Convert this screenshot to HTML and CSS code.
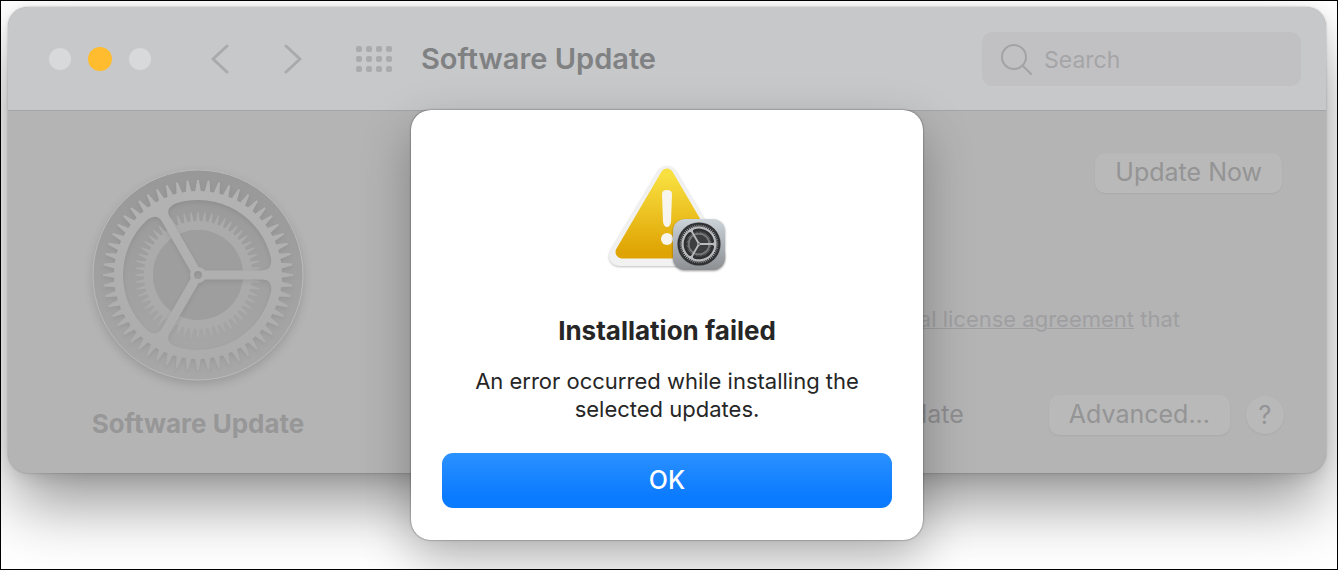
FILE: index.html
```html
<!DOCTYPE html>
<html lang="en">
<head>
    <meta charset="UTF-8">
    <meta name="viewport" content="width=device-width, initial-scale=1.0">
    <title>Software Update</title>
    <link rel="stylesheet" href="styles.css">
</head>
<body>
    <!-- shared gear drawing, coloured with custom properties -->
    <svg class="defs" width="0" height="0" aria-hidden="true">
        <defs>
            <path id="cutout" d="M2.6-4.5H64Q74.8-4.5 73-17A75 75 0 0 0-21.8-71.8Q-33.5-67-28.1-57.7Z"/>
            <mask id="spokes" maskUnits="userSpaceOnUse" x="-110" y="-110" width="220" height="220">
                <circle r="105" fill="#fff"/>
                <use href="#cutout"/>
                <use href="#cutout" transform="rotate(120)"/>
                <use href="#cutout" transform="rotate(240)"/>
                <circle r="8" fill="#fff"/>
                <circle r="4"/>
            </mask>
            <linearGradient id="disc" x1="0" y1="0" x2="0" y2="1">
                <stop offset="0" stop-color="#989899"/>
                <stop offset="1" stop-color="#a8a8a9"/>
            </linearGradient>
            <linearGradient id="front" x1="0" y1="0" x2="0" y2="1">
                <stop offset="0" stop-color="#b3b3b4"/>
                <stop offset="1" stop-color="#acacad"/>
            </linearGradient>
            <linearGradient id="yellow" x1="0" y1="0" x2="0" y2="1">
                <stop offset="0" stop-color="#f8e040"/>
                <stop offset="1" stop-color="#dfa403"/>
            </linearGradient>
            <linearGradient id="tile" x1="0" y1="0" x2="0" y2="1">
                <stop offset="0" stop-color="#cbd3d9"/>
                <stop offset="1" stop-color="#8d9093"/>
            </linearGradient>
            <g id="gear">
                <circle class="gear-disc" r="105"/>
                <path class="gear-inner" id="inner-teeth"/>
                <circle class="gear-core" r="45"/>
                <g class="gear-front">
                    <path id="outer-teeth" mask="url(#spokes)"/>
                </g>
            </g>
        </defs>
    </svg>

    <div class="desktop">
        <main class="window">
            <header class="toolbar">
                <div class="lights">
                    <button class="light" aria-label="Close"></button>
                    <button class="light minimize" aria-label="Minimize"></button>
                    <button class="light" aria-label="Zoom"></button>
                </div>
                <nav class="nav">
                    <button class="icon-btn" aria-label="Back">
                        <svg width="18" height="30" viewBox="0 0 18 30"><path d="M16 2L2 15L16 28"/></svg>
                    </button>
                    <button class="icon-btn" aria-label="Forward">
                        <svg width="18" height="30" viewBox="0 0 18 30"><path d="M2 2L16 15L2 28"/></svg>
                    </button>
                </nav>
                <button class="icon-btn all" aria-label="Show all">
                    <span></span><span></span><span></span><span></span>
                    <span></span><span></span><span></span><span></span>
                    <span></span><span></span><span></span><span></span>
                </button>
                <h1 class="title">Software Update</h1>
                <label class="search">
                    <svg width="32" height="32" viewBox="0 0 32 32"><circle cx="14" cy="14" r="12"/><path d="M23 23L31 31"/></svg>
                    <input type="text" placeholder="Search" aria-label="Search">
                </label>
            </header>

            <div class="content">
                <section class="pane">
                    <svg class="pane-icon" viewBox="-110 -110 220 220"><use href="#gear"/></svg>
                    <h2>Software Update</h2>
                </section>
                <section class="details">
                    <button class="btn">Update Now</button>
                    <p class="license"><a href="#">original license agreement</a> that</p>
                    <div class="options">
                        <span class="auto">up to date</span>
                        <button class="btn advanced">Advanced...</button>
                        <button class="btn help" aria-label="Help">?</button>
                    </div>
                </section>
            </div>

            <div class="dialog" role="alertdialog" aria-labelledby="dialog-title" aria-describedby="dialog-text">
                <svg class="warning" viewBox="0 0 120 120">
                    <path class="warning-edge" d="M60 21L108 101H12Z"/>
                    <path class="warning-fill" d="M60 20L105 97H15Z"/>
                    <path class="mark" d="M55 39Q55 35 60 35T65 39L64 67Q63 72 60 72T56 67Z"/>
                    <circle class="mark" cx="60" cy="84" r="6"/>
                    <rect class="tile" x="66" y="64" width="52" height="51" rx="12"/>
                    <use class="badge-gear" href="#gear" transform="translate(92 89) scale(.205)"/>
                </svg>
                <h2 id="dialog-title">Installation failed</h2>
                <p id="dialog-text">An error occurred while installing the selected updates.</p>
                <button class="ok">OK</button>
            </div>
        </main>
    </div>

    <script>
        // toothed ring as one path: base radius, tip radius, hole radius
        function toothedRing(count, base, tip, hole) {
            const step = Math.PI * 2 / count;
            const point = (r, a) => `${(r * Math.cos(a)).toFixed(2)} ${(r * Math.sin(a)).toFixed(2)}`;
            let d = '';
            for (let i = 0; i < count; i++) {
                const a = i * step;
                d += (i ? 'L' : 'M') + point(base, a - step * 0.3);
                d += 'L' + point(tip, a - step * 0.08);
                d += 'L' + point(tip, a + step * 0.08);
                d += 'L' + point(base, a + step * 0.3);
            }
            d += 'Z';
            if (hole) {
                d += `M${hole} 0A${hole} ${hole} 0 1 0 ${-hole} 0A${hole} ${hole} 0 1 0 ${hole} 0Z`;
            }
            return d;
        }

        document.getElementById('outer-teeth').setAttribute('d', toothedRing(56, 84, 95, 0));
        document.getElementById('inner-teeth').setAttribute('d', toothedRing(56, 54, 63, 45));
    </script>
</body>
</html>
```

FILE: styles.css
```css
* {
    box-sizing: border-box;
}
body {
    margin: 0;
    font-family: Inter, "Liberation Sans", sans-serif;
    color: #262626;
}
button {
    font-family: inherit;
    border: none;
    padding: 0;
    cursor: pointer;
}
h1, h2, p {
    margin: 0;
}
.defs {
    position: absolute;
}
.desktop {
    min-height: 100vh;
    padding: 6px 11px 6px 7px;
    border: 1px solid #000;
    background: #fff;
    overflow: hidden;
}
.window {
    position: relative;
    border-radius: 20px;
    background: #b4b4b5;
    box-shadow: 0 0 2px rgba(0, 0, 0, 0.3), 0 36px 64px -6px rgba(0, 0, 0, 0.42), 0 4px 16px rgba(0, 0, 0, 0.1);
}

/* toolbar */
.toolbar {
    display: flex;
    align-items: center;
    height: 104px;
    padding: 0 25px 0 41px;
    border-bottom: 1px solid #a5a5a6;
    border-radius: 20px 20px 0 0;
    background: #c7c8ca;
}
.lights {
    display: flex;
    align-items: center;
    gap: 18px;
}
.light {
    width: 22px;
    height: 22px;
    border-radius: 50%;
    background: #d8d9db;
}
.minimize {
    width: 24px;
    height: 24px;
    margin: 0 -1px;
    background: #febc2e;
}
.nav {
    display: flex;
    gap: 55px;
    margin-left: 60px;
}
.icon-btn {
    background: none;
}
.icon-btn svg {
    display: block;
    fill: none;
    stroke: #a9aaab;
    stroke-width: 3;
    stroke-linecap: round;
    stroke-linejoin: round;
}
.all {
    display: grid;
    grid-template-columns: repeat(4, 6px);
    gap: 4px;
    margin-left: 54px;
}
.all span {
    height: 6px;
    border-radius: 2px;
    background: #aaabac;
}
.title {
    margin-left: 29px;
    font-size: 29px;
    font-weight: 600;
    color: #808182;
}
.search {
    display: flex;
    align-items: center;
    gap: 12px;
    width: 319px;
    height: 54px;
    margin-left: auto;
    padding: 0 18px;
    border-radius: 10px;
    background: #c1c1c3;
}
.search svg {
    flex: none;
    fill: none;
    stroke: #a3a3a5;
    stroke-width: 2;
    stroke-linecap: round;
}
.search input {
    width: 100%;
    padding: 3px 0 0;
    border: none;
    outline: none;
    background: none;
    font-family: inherit;
    font-size: 23px;
}
.search input::placeholder {
    color: #a5a5a7;
    opacity: 1;
}

/* content */
.content {
    display: flex;
}
.pane {
    width: 380px;
    padding: 54px 0 33px;
    text-align: center;
}
.pane-icon {
    display: block;
    width: 220px;
    height: 220px;
    margin: 0 auto 23px;
}
.pane h2 {
    font-size: 26px;
    line-height: 32px;
    font-weight: 700;
    color: #979798;
}
.details {
    display: flex;
    flex: 1;
    flex-direction: column;
    align-items: flex-end;
    justify-content: space-between;
    padding: 42px 44px 38px 0;
}
.btn {
    height: 40px;
    padding: 0 20px 2px;
    border-radius: 10px;
    background: #b9b9b9;
    box-shadow: 0 1px 2px rgba(0, 0, 0, 0.06);
    font-size: 25px;
    color: #949495;
}
.license {
    margin: 50px 102px 0 0;
    font-size: 22px;
    color: #9f9fa1;
}
.license a {
    color: inherit;
    text-decoration-thickness: 1px;
}
.options {
    display: flex;
    align-items: center;
}
.auto {
    padding-bottom: 2px;
    font-size: 25px;
    color: #8f8f91;
}
.advanced {
    margin: 0 16px 0 85px;
}
.help {
    width: 38px;
    height: 38px;
    margin-right: -2px;
    padding: 0;
    border-radius: 50%;
}

/* gear */
.pane-icon {
    --disc: url(#disc);
    --front: url(#front);
    --inner: #ababac;
    --core: #9e9e9f;
    --rim: #b9b9ba;
    filter: drop-shadow(0 4px 5px rgba(0, 0, 0, 0.14));
}
.badge-gear {
    --disc: #2f3032;
    --front: #b9bcbf;
    --inner: #77797b;
    --core: #3d3e40;
    --rim: #55575a;
}
.gear-disc {
    fill: var(--disc);
    stroke: var(--rim);
    stroke-width: 1;
}
.gear-inner {
    fill: var(--inner);
    fill-rule: evenodd;
}
.gear-core {
    fill: var(--core);
}
.gear-front {
    fill: var(--front);
    filter: drop-shadow(0 2px 2px rgba(0, 0, 0, 0.08));
}

/* dialog */
.dialog {
    position: absolute;
    top: 103px;
    left: 50%;
    width: 512px;
    padding: 45px 31px 32px;
    border-radius: 20px;
    background: #fff;
    box-shadow: 0 0 2px rgba(0, 0, 0, 0.6), 0 20px 50px rgba(0, 0, 0, 0.28);
    text-align: center;
    transform: translateX(-50%);
}
.warning {
    display: block;
    width: 120px;
    height: 120px;
    margin: 0 auto 36px;
}
.warning-edge, .warning-fill {
    stroke-linejoin: round;
}
.warning-edge {
    fill: #f1f1f1;
    stroke: #f1f1f1;
    stroke-width: 20;
    filter: drop-shadow(0 1px 1px rgba(0, 0, 0, 0.25));
}
.warning-fill {
    fill: url(#yellow);
    stroke: url(#yellow);
    stroke-width: 13;
}
.mark {
    fill: #f7f5ee;
}
.tile {
    fill: url(#tile);
    filter: drop-shadow(0 1px 1px rgba(0, 0, 0, 0.4));
}
.dialog h2 {
    margin-bottom: 16px;
    font-size: 26px;
    line-height: 40px;
}
.dialog p {
    margin: 0 auto 30px;
    padding: 0 20px;
    font-size: 22px;
    line-height: 28px;
}
.ok {
    width: 100%;
    height: 55px;
    padding-bottom: 2px;
    border-radius: 11px;
    background: linear-gradient(#2b91ff, #0a7aff 80%);
    font-size: 25px;
    font-weight: 500;
    color: #fff;
}
```
